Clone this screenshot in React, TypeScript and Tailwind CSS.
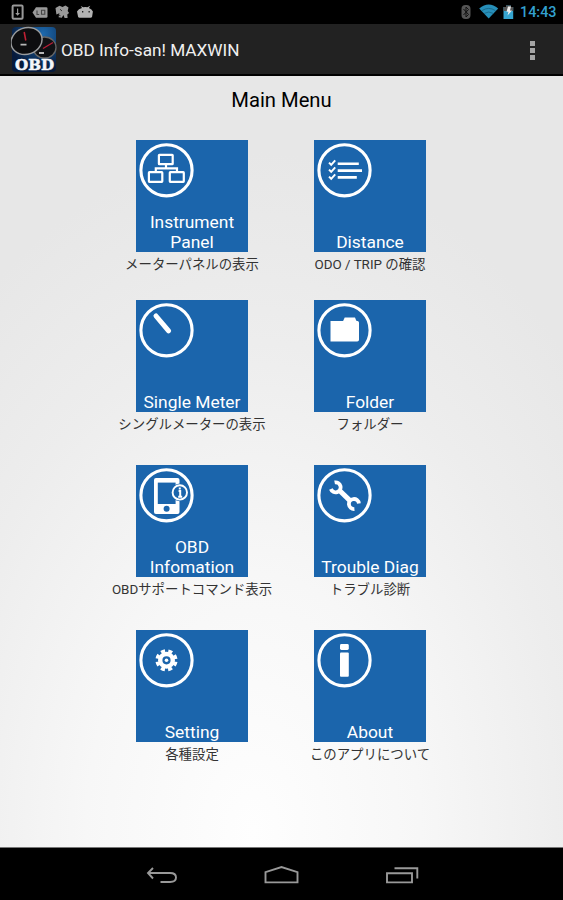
import React from "react";

type MenuItem = {
    label: string[];
    caption: string;
    icon: React.ReactNode;
};

// every glyph is drawn on the same 60x60 box as the ring
function RingIcon({ children }: { children: React.ReactNode }) {
    return (
        <svg width="60" height="60" viewBox="0 0 60 60" fill="none">
            <circle cx="30.5" cy="30.3" r="25.6" stroke="#fff" strokeWidth="3.1" />
            {children}
        </svg>
    );
}

const rows: MenuItem[][] = [
    [
        {
            label: ["Instrument", "Panel"],
            caption: "メーターパネルの表示",
            icon: (
                <g stroke="#fff" strokeWidth="2.2">
                    <rect x="22.9" y="14.8" width="13.8" height="9.4" rx="0.5" />
                    <rect x="12.9" y="32.2" width="13.4" height="9.6" rx="0.5" />
                    <rect x="33.8" y="32.2" width="14" height="9.6" rx="0.5" />
                    <path d="M30 24.5V29M19.8 32V28.4H41V32" />
                </g>
            ),
        },
        {
            label: ["Distance"],
            caption: "ODO / TRIP の確認",
            icon: (
                <g stroke="#fff">
                    <path
                        strokeWidth="2"
                        d="M15 22.6l2.2 2.2 4-4.4M15 29.6l2.2 2.2 4-4.4M15 36.6l2.2 2.2 4-4.4"
                    />
                    <path
                        strokeWidth="2.6"
                        d="M23.7 23.8H44.8M23.7 30.6H48M23.7 37.4H42.8"
                    />
                </g>
            ),
        },
    ],
    [
        {
            label: ["Single Meter"],
            caption: "シングルメーターの表示",
            icon: (
                <path
                    d="M20 16L32.6 30.8"
                    stroke="#fff"
                    strokeWidth="5"
                    strokeLinecap="round"
                />
            ),
        },
        {
            label: ["Folder"],
            caption: "フォルダー",
            icon: (
                <path
                    fill="#fff"
                    d="M16.5 21h12.6l1.600-3.400h10.300l1.300 3.200q2.700.2 2.700 1.800v17.200q0 1.800-1.800 1.800H16.500z"
                />
            ),
        },
    ],
    [
        {
            label: ["OBD", "Infomation"],
            caption: "OBDサポートコマンド表示",
            icon: (
                <g>
                    <rect x="18" y="13" width="25.5" height="36" rx="2" fill="#fff" />
                    <rect x="21.8" y="17.6" width="17.8" height="21.4" fill="#1b65ac" />
                    <circle cx="30.6" cy="43.8" r="3" fill="#1b65ac" />
                    <circle cx="43.8" cy="27.4" r="8.8" fill="#1b65ac" />
                    <circle cx="43.8" cy="27.4" r="7.2" stroke="#fff" strokeWidth="1.9" />
                    <path d="M43.8 22.4v2.200M42.600 26h1.600v6M42.200 31.800h4" stroke="#fff" strokeWidth="2" />
                </g>
            ),
        },
        {
            label: ["Trouble Diag"],
            caption: "トラブル診断",
            icon: (
                <g stroke="#fff">
                    <path
                        strokeWidth="3.8"
                        d="M20.6 17.400a5 5 0 1 1-3.700 6.600M40.400 44a5 5 0 1 1 4.500-5.600"
                    />
                    <path strokeWidth="5" d="M25 25L37 36.600" />
                </g>
            ),
        },
    ],
    [
        {
            label: ["Setting"],
            caption: "各種設定",
            icon: (
                <g stroke="#fff">
                    <circle cx="30.5" cy="30.3" r="6.3" strokeWidth="4.400" />
                    <circle cx="30.5" cy="30.3" r="1.8" fill="#fff" stroke="none" />
                    <circle
                        cx="30.5"
                        cy="30.3"
                        r="9.2"
                        strokeWidth="3.800"
                        strokeDasharray="4 3.225"
                        strokeDashoffset="-1.500"
                    />
                </g>
            ),
        },
        {
            label: ["About"],
            caption: "このアプリについて",
            icon: (
                <g fill="#fff">
                    <rect x="26" y="14" width="8.8" height="6" rx="1.4" />
                    <rect x="26" y="22.400" width="8.8" height="24.400" rx="1" />
                </g>
            ),
        },
    ],
];

function AppIcon() {
    return (
        <svg width="46" height="46" viewBox="0 0 46 46">
            <defs>
                <radialGradient id="sky" cx="70%" cy="15%" r="80%">
                    <stop offset="0" stopColor="#1d69ad" />
                    <stop offset="1" stopColor="#061a3c" />
                </radialGradient>
            </defs>
            <rect x="1" y="1" width="44" height="45" rx="4" fill="url(#sky)" />
            <ellipse cx="33.5" cy="21.5" rx="11.5" ry="10.5" fill="#101114" stroke="#666" strokeWidth="1.3" />
            <ellipse cx="15.5" cy="15" rx="15.8" ry="13.2" fill="#0d0d0f" stroke="#999b9d" strokeWidth="1.5" transform="rotate(-20 15.5 15)" />
            <path d="M13.2 6l1.600 8.500" stroke="#c02034" strokeWidth="1.6" />
            <path d="M32 22.500l10-6" stroke="#b81e38" strokeWidth="1.4" />
            <path d="M9.500 18.700h6M28 27h5" stroke="#b8b8b8" strokeWidth="1.8" />
            <text
                x="23.5"
                y="44.3"
                textAnchor="middle"
                textLength="39"
                lengthAdjust="spacingAndGlyphs"
                fill="#f4f6fa"
                stroke="#f4f6fa"
                strokeWidth="0.5"
                fontFamily="'DejaVu Serif', serif"
                fontWeight="bold"
                fontSize="14"
            >
                OBD
            </text>
        </svg>
    );
}

function StatusBar() {
    return (
        <div className="h-6 bg-black flex items-center justify-between pl-[11px] pr-[6px]">
            <svg width="90" height="24" viewBox="0 0 90 24" fill="#999">
                <rect x="1.600" y="5.400" width="10" height="13.400" rx="1" fill="none" stroke="#999" strokeWidth="2" />
                <path d="M6 8.500h1.200v4.500h1.800l-2.400 2.800-2.400-2.800H6z" />
                <path d="M21.500 12.500l3.500-5.300h10.200q1.300 0 1.300 1.200v8.200q0 1.200-1.300 1.200H25z" />
                <path d="M26 10.500v4h2.200M30.500 10.300h3.300v4h-3.300z" fill="none" stroke="#444" strokeWidth="1.100" />
                <path d="M44.500 8l4-2.200 3 1.200 3-1.600 3 2.200-.8 3.400 1.400 2-1.800 1.400.3 3.600h-3l-1.200-3-1.600 2.800-3.200-.6.800-4-3 1.400z" />
                <path d="M49 9.200l2 1.800M47.500 15l2 .8" stroke="#333" strokeWidth="1" />
                <path d="M66 11.500q1.500-3 5-3.600l-1.300-1.800 2.600 1.200q2-.5 4 0l3-1.600-1.400 2.200q3 1.200 4 3.600l-.8 5.300q-.4 1-1.600 1H68.600q-1.200 0-1.500-1z" fill="#b3b3b3" />
                <path d="M71 11.800h1.300M77.500 11.800h1.300" stroke="#222" strokeWidth="1.400" />
            </svg>
            <div className="flex items-center">
                <svg width="56" height="24" viewBox="0 0 56 24">
                    <rect x="0.500" y="5" width="9" height="14" rx="4" fill="#555" />
                    <path d="M2.500 9l5 5.500-2.500 2.500V7l2.500 2.500-5 5.500" fill="none" stroke="#111" strokeWidth="1" />
                    <path d="M18.200 8.600q9.500-8 19 0L27.700 18.600z" fill="#278fb9" />
                    <path d="M21 10.600q6.700-4.400 13.400 0M23.200 13.400q4.500-2.800 9 0" fill="none" stroke="#176282" strokeWidth="0.800" />
                    <path d="M42.500 7h2.500V5.500h5V7h2.200v12H42.500z" fill="#36a5d0" />
                    <path d="M42.500 7h2.500V5.500h5V7h2.200v4H42.500z" fill="#555" />
                    <path d="M47 6.500h3l-1 4h2l-4.500 5 1-3.800h-2z" fill="#eee" />
                </svg>
                <span className="ml-[3px] w-[37px] text-[14.4px] leading-6 font-medium text-[#33a0cf] pt-0.5">
                    14:43
                </span>
            </div>
        </div>
    );
}

function ActionBar() {
    return (
        <div className="h-[52px] bg-[#222222] border-b-2 border-black flex items-center justify-between pl-[11px] pr-[28px]">
            <div className="flex items-center gap-1">
                <AppIcon />
                <h1 className="pt-[3px] text-[17.2px] leading-none text-[#f0f0f0] whitespace-nowrap">
                    OBD Info-san! MAXWIN
                </h1>
            </div>
            <div className="pt-[2px] flex flex-col gap-[2px]">
                <span className="size-[5px] bg-[#a5a5a5]" />
                <span className="size-[5px] bg-[#a5a5a5]" />
                <span className="size-[5px] bg-[#a5a5a5]" />
            </div>
        </div>
    );
}

function Tile({ item }: { item: MenuItem }) {
    return (
        <div className="w-[112px] flex flex-col items-center">
            <button className="w-[112px] h-28 bg-[#1b65ac] flex flex-col justify-between items-stretch">
                <RingIcon>{item.icon}</RingIcon>
                <span className="text-[17.4px] leading-5 text-white text-center whitespace-nowrap">
                    {item.label.map((line) => (
                        <span key={line} className="block">
                            {line}
                        </span>
                    ))}
                </span>
            </button>
            <span className="mt-[3px] text-[13.4px] leading-5 text-[#333] whitespace-nowrap">
                {item.caption}
            </span>
        </div>
    );
}

function NavBar() {
    return (
        <div className="h-[53px] bg-black border-t border-[#777] flex items-center justify-center pr-px">
            <svg width="282" height="30" viewBox="0 0 282 30" fill="none" stroke="#999" strokeWidth="1.900">
                <path d="M13 9l-5 5 5 5.500M8 14H30q6 0 6 4.500t-6 4.500H20.500" />
                <path d="M125.500 23.400V13.200L141.500 8l16 5.200v10.200z" />
                <path d="M247 14.200h25v9.200h-25zM254.500 9.300H277.300V19.500" />
            </svg>
        </div>
    );
}

export default function App() {
    return (
        <div className="w-[563px] h-[900px] flex flex-col overflow-hidden font-[Roboto,'Noto_Sans_CJK_JP',sans-serif]">
            <StatusBar />
            <ActionBar />
            <main className="flex-1 flex flex-col items-center bg-[radial-gradient(ellipse_440px_680px_at_45%_98%,#fefefe_0%,#f7f7f7_38%,#ededed_72%,#e7e7e7_100%)]">
                <h2 className="mt-3 text-[20.2px] leading-6 text-black">Main Menu</h2>
                <div className="mt-[27.500px] mr-px grid grid-cols-[112px_112px] grid-rows-[160px_165px_165px_165px] gap-x-[66px]">
                    {rows.flat().map((item) => (
                        <Tile key={item.caption} item={item} />
                    ))}
                </div>
            </main>
            <NavBar />
        </div>
    );
}
